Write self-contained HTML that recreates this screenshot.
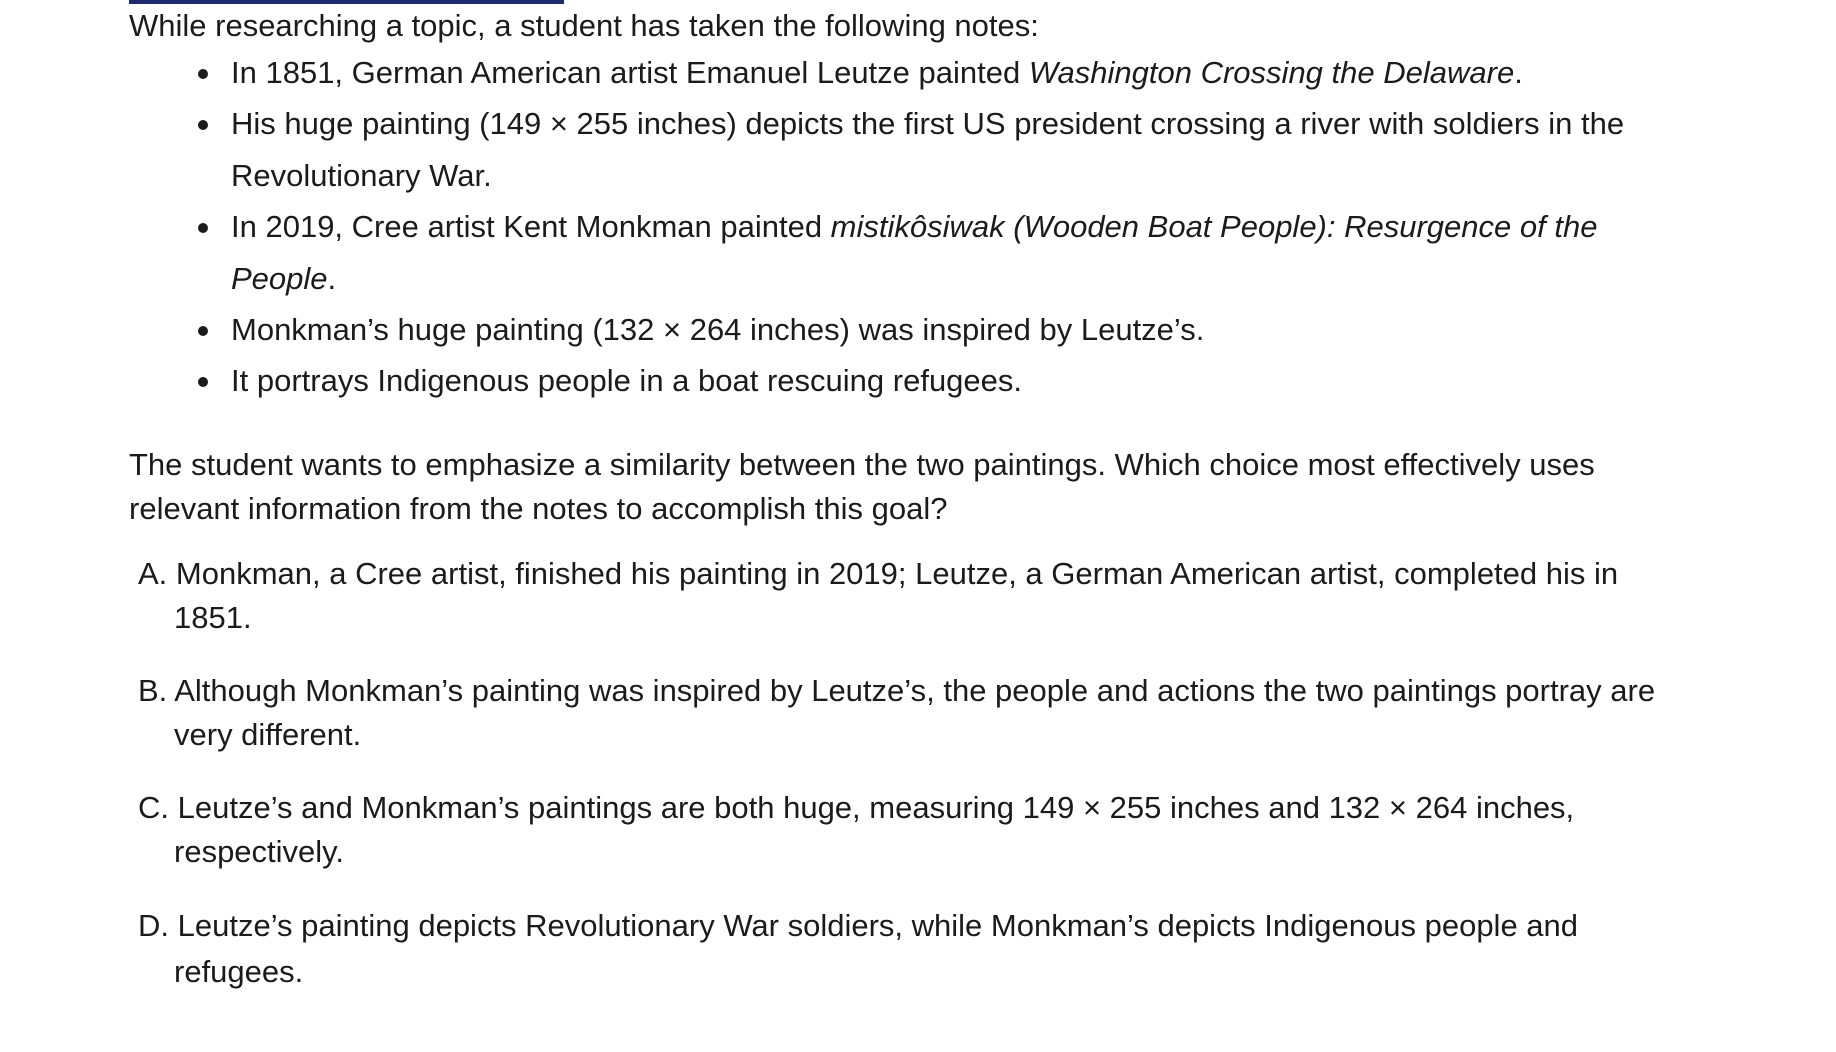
<!DOCTYPE html>
<html><head><meta charset="utf-8"><style>
body{margin:0;width:1836px;height:1052px;background:#fff;position:relative;overflow:hidden;font-family:"Liberation Sans",sans-serif;font-size:31px;color:#1b1b1b}
.l{position:absolute;white-space:nowrap;line-height:36px;transform:translateY(-18px)}
.b{position:absolute;width:10px;height:10px;border-radius:50%;background:#1b1b1b;left:198px}
i{font-style:italic}
</style></head><body>
<div style="position:absolute;left:129px;top:0;width:435px;height:4px;background:#1d2a6e"></div>
<div class="l" style="left:129px;top:26px">While researching a topic, a student has taken the following notes:</div>
<div class="b" style="top:69px"></div><div class="l" style="left:231px;top:73px">In 1851, German American artist Emanuel Leutze painted <i>Washington Crossing the Delaware</i>.</div>
<div class="b" style="top:120px"></div><div class="l" style="left:231px;top:124px">His huge painting (149 × 255 inches) depicts the first US president crossing a river with soldiers in the</div>
<div class="l" style="left:231px;top:176px">Revolutionary War.</div>
<div class="b" style="top:223px"></div><div class="l" style="left:231px;top:227px">In 2019, Cree artist Kent Monkman painted <i>mistikôsiwak (Wooden Boat People): Resurgence of the</i></div>
<div class="l" style="left:231px;top:279px"><i>People</i>.</div>
<div class="b" style="top:326px"></div><div class="l" style="left:231px;top:330px">Monkman’s huge painting (132 × 264 inches) was inspired by Leutze’s.</div>
<div class="b" style="top:377px"></div><div class="l" style="left:231px;top:381px">It portrays Indigenous people in a boat rescuing refugees.</div>
<div class="l" style="left:129px;top:465px">The student wants to emphasize a similarity between the two paintings. Which choice most effectively uses</div>
<div class="l" style="left:129px;top:509px">relevant information from the notes to accomplish this goal?</div>
<div class="l" style="left:138px;top:574px">A. Monkman, a Cree artist, finished his painting in 2019; Leutze, a German American artist, completed his in</div>
<div class="l" style="left:174px;top:618px">1851.</div>
<div class="l" style="left:138px;top:691px">B. Although Monkman’s painting was inspired by Leutze’s, the people and actions the two paintings portray are</div>
<div class="l" style="left:174px;top:735px">very different.</div>
<div class="l" style="left:138px;top:808px">C. Leutze’s and Monkman’s paintings are both huge, measuring 149 × 255 inches and 132 × 264 inches,</div>
<div class="l" style="left:174px;top:852px">respectively.</div>
<div class="l" style="left:138px;top:926px">D. Leutze’s painting depicts Revolutionary War soldiers, while Monkman’s depicts Indigenous people and</div>
<div class="l" style="left:174px;top:972px">refugees.</div>
</body></html>
